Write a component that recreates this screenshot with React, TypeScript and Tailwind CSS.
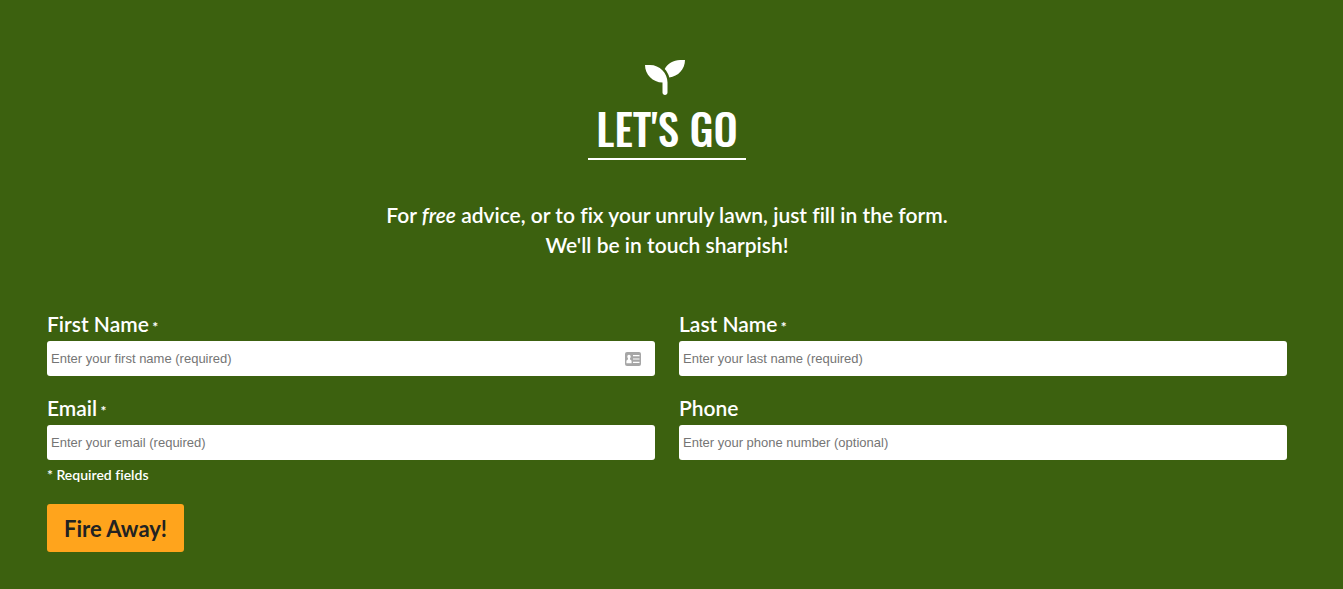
import type { InputHTMLAttributes } from 'react';

type FieldProps = InputHTMLAttributes<HTMLInputElement> & {
  id: string;
  label: string;
  contactIcon?: boolean;
};

function SeedlingIcon() {
  return (
    <svg aria-hidden="true" viewBox="0 32 512 448" fill="currentColor" className="mr-1 h-[35px] w-10">
      <path d="M64 96H0c0 123.700 100.300 224 224 224v128c0 17.700 14.300 32 32 32s32-14.300 32-32V320C288 196.300 187.700 96 64 96zM448 32c-84.200 0-157.400 46.500-195.700 115.200 27.700 30.200 48.200 66.900 59 107.600C424 243.100 512 147.900 512 32z" />
    </svg>
  );
}

function ContactCardIcon() {
  return (
    <svg
      aria-hidden="true"
      viewBox="0 0 16 14"
      className="pointer-events-none absolute top-1/2 right-3.5 h-3.5 w-4 -translate-y-1/2"
    >
      <rect width="16" height="14" rx="2" fill="#a6a6a6" />
      <path
        fill="#fff"
        d="M4 2.700c1.100 0 1.700.8 1.700 1.900 0 .8-.3 1.400-.7 1.800v1c1 .4 1.600 1 1.600 2.100v1.700H1.400V9.500c0-1.100.6-1.700 1.600-2.100v-1c-.4-.4-.7-1-.7-1.800 0-1.100.6-1.900 1.700-1.900zM8 3h6.500v1.200H8zM8 6.400h6.500v1.200H8zM8 9.800h6.500v1.200H8z"
      />
    </svg>
  );
}

function Field({ id, label, required, contactIcon, ...input }: FieldProps) {
  return (
    <div>
      <label htmlFor={id} className="block h-[33px] text-[21px] leading-8">
        {label}
        {required && <span className="text-sm font-bold"> *</span>}
      </label>
      <div className="relative">
        <input
          id={id}
          name={id}
          required={required}
          className="block h-[35px] w-full rounded-[3px] bg-white px-1 font-['Liberation_Sans',Arial,sans-serif] text-[13px] font-normal text-[#222] placeholder:text-[#757575]"
          {...input}
        />
        {contactIcon && <ContactCardIcon />}
      </div>
    </div>
  );
}

export default function App() {
  return (
    <main className="min-h-screen bg-[#3c610f] pt-[60px] pr-14 pb-9 pl-[47px] font-[Lato,sans-serif] font-semibold text-white [font-variant-ligatures:none]">
      <header className="flex flex-col items-center text-center">
        <SeedlingIcon />
        <h2 className="mt-[3px] border-b-2 border-white px-2 font-[Oswald,sans-serif] text-[43px] leading-[60px] font-medium">
          LET'S GO
        </h2>
        <p className="mt-10 text-[21px] leading-[30px]">
          For <em>free</em> advice, or to fix your unruly lawn, just fill in the form.
          <br />
          We'll be in touch sharpish!
        </p>
      </header>

      <form className="mt-12" onSubmit={(event) => event.preventDefault()}>
        <div className="grid grid-cols-2 gap-x-6 gap-y-4">
          <Field
            id="first-name"
            label="First Name"
            placeholder="Enter your first name (required)"
            required
            contactIcon
          />
          <Field
            id="last-name"
            label="Last Name"
            placeholder="Enter your last name (required)"
            required
          />
          <Field
            id="email"
            type="email"
            label="Email"
            placeholder="Enter your email (required)"
            required
          />
          <Field
            id="phone"
            type="tel"
            label="Phone"
            placeholder="Enter your phone number (optional)"
          />
        </div>
        <p className="mt-1 text-sm leading-[22px]">* Required fields</p>
        <button
          type="submit"
          className="mt-[18px] h-12 rounded-[3px] bg-[#ffa41c] px-[17px] text-[22px] font-bold text-[#222]"
        >
          Fire Away!
        </button>
      </form>
    </main>
  );
}
